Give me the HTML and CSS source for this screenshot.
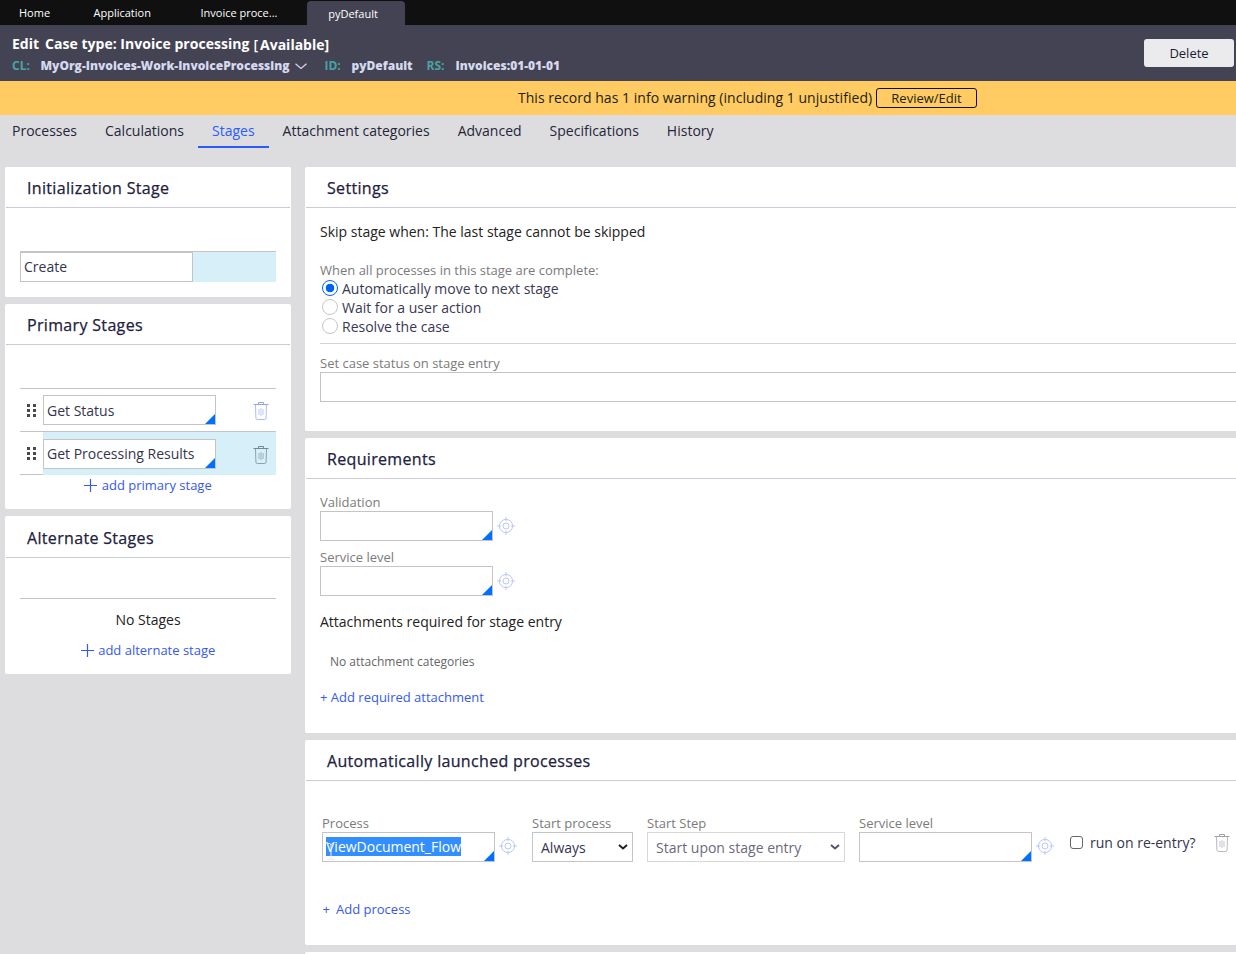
FILE: index.html
```html
<!DOCTYPE html>
<html lang="en">
<head>
<meta charset="utf-8">
<title>pyDefault</title>
<link rel="stylesheet" href="styles.css">
</head>
<body>
<svg class="sprite" aria-hidden="true">
  <symbol id="trash" viewBox="0 0 16 20"><path d="M.5 3.500h15M5.500 3V1.500h5V3" fill="none" stroke="currentColor"/><path d="M2.500 4l.4 13q.1 1.500 1.500 1.500h7.200q1.400 0 1.500-1.500l.4-13" fill="none" stroke="currentColor" opacity=".75"/><path d="M6 8v6M8 7v8M10 8v6" stroke="currentColor" opacity=".6"/></symbol>
  <symbol id="target" viewBox="0 0 18 18"><g fill="none" stroke="currentColor"><circle cx="9" cy="9" r="6.600"/><circle cx="9" cy="9" r="3"/><path d="M9 0v4M9 14v4M0 9h4M14 9h4"/></g></symbol>
  <symbol id="plus" viewBox="0 0 13 13"><path d="M6.500 0v13M0 6.500h13" stroke="currentColor" stroke-width="1.200"/></symbol>
  <symbol id="chev" viewBox="0 0 10 6"><path d="M1 1l4 3.500L9 1" fill="none" stroke="currentColor" stroke-width="2"/></symbol>
</svg>

<nav class="topbar">
  <span class="top-tab home">Home</span>
  <span class="top-tab app">Application</span>
  <span class="top-tab invoice">Invoice proce...</span>
  <span class="top-tab current">pyDefault</span>
</nav>

<header class="header">
  <div class="record">
    <div class="title"><span class="edit">Edit</span><span class="name">Case type: Invoice processing</span><span class="avail">[<b>Available]</b></span></div>
    <div class="meta">
      <span class="key">CL:</span><span class="val cl">MyOrg-Invoices-Work-InvoiceProcessing</span>
      <svg class="caret" viewBox="0 0 12 7"><path d="M.5.8L6 5.500 11.500.8" fill="none" stroke="currentColor" stroke-width="1.200"/></svg>
      <span class="key id">ID:</span><span class="val idv">pyDefault</span>
      <span class="key rs">RS:</span><span class="val rsv">Invoices:01-01-01</span>
    </div>
  </div>
  <button class="delete">Delete</button>
</header>

<div class="warning"><span class="warn-text">This record has 1 info warning (including 1 unjustified)</span><button class="review">Review/Edit</button></div>

<nav class="tabs">
  <a class="tab">Processes</a><a class="tab">Calculations</a><a class="tab active">Stages</a><a class="tab">Attachment categories</a><a class="tab">Advanced</a><a class="tab">Specifications</a><a class="tab">History</a>
</nav>

<main class="main">
  <aside class="col left">
    <section class="card init">
      <h2>Initialization Stage</h2>
      <div class="init-row"><div class="field">Create</div></div>
    </section>
    <section class="card primary">
      <h2>Primary Stages</h2>
      <div class="stage-list">
        <div class="stage"><span class="grip"><i></i><i></i><i></i><i></i><i></i><i></i></span><div class="stage-body"><div class="field combo">Get Status</div><svg class="trash"><use href="#trash"/></svg></div></div>
        <div class="stage selected"><span class="grip"><i></i><i></i><i></i><i></i><i></i><i></i></span><div class="stage-body"><div class="field combo">Get Processing Results</div><svg class="trash"><use href="#trash"/></svg></div></div>
      </div>
      <a class="link add"><svg class="plus"><use href="#plus"/></svg><span class="add-p">add primary stage</span></a>
    </section>
    <section class="card alternate">
      <h2>Alternate Stages</h2>
      <div class="empty">No Stages</div>
      <a class="link add"><svg class="plus"><use href="#plus"/></svg><span class="add-a">add alternate stage</span></a>
    </section>
  </aside>

  <div class="col right">
    <section class="card settings">
      <h2>Settings</h2>
      <div class="body">
        <p class="text skip">Skip stage when: The last stage cannot be skipped</p>
        <div class="label when">When all processes in this stage are complete:</div>
        <div class="radio on"><i></i><span class="r1">Automatically move to next stage</span></div>
        <div class="radio"><i></i><span class="r2">Wait for a user action</span></div>
        <div class="radio"><i></i><span class="r3">Resolve the case</span></div>
        <div class="rule"></div>
        <div class="label status">Set case status on stage entry</div>
        <div class="field wide"></div>
      </div>
    </section>
    <section class="card requirements">
      <h2>Requirements</h2>
      <div class="body">
        <div class="label">Validation</div>
        <div class="line"><div class="field combo"></div><svg class="target"><use href="#target"/></svg></div>
        <div class="label second">Service level</div>
        <div class="line"><div class="field combo"></div><svg class="target"><use href="#target"/></svg></div>
        <p class="text attach">Attachments required for stage entry</p>
        <p class="none">No attachment categories</p>
        <a class="link add-att">+ Add required attachment</a>
      </div>
    </section>
    <section class="card processes">
      <h2>Automatically launched processes</h2>
      <div class="process-row">
        <div class="cell c-process"><div class="label">Process</div><div class="line"><div class="field combo"><span class="picked">ViewDocument_Flow</span><svg class="ibeam" viewBox="0 0 8 17"><path d="M1 .5h2l1 1 1-1h2M4 1v15M.5 16.500h2.500l1-1 1 1h2.500" fill="none" stroke="currentColor"/></svg></div><svg class="target"><use href="#target"/></svg></div></div>
        <div class="cell c-start"><div class="label">Start process</div><div class="field select"><span class="always">Always</span><svg class="chev"><use href="#chev"/></svg></div></div>
        <div class="cell c-step"><div class="label">Start Step</div><div class="field select dim"><span class="upon">Start upon stage entry</span><svg class="chev"><use href="#chev"/></svg></div></div>
        <div class="cell c-level"><div class="label">Service level</div><div class="line"><div class="field combo"></div><svg class="target"><use href="#target"/></svg></div></div>
        <div class="reentry"><i></i><span>run on re-entry?</span></div>
        <svg class="trash"><use href="#trash"/></svg>
      </div>
      <a class="link add-proc"><span>+</span><span>Add process</span></a>
    </section>
    <section class="card next"></section>
  </div>
</main>
</body>
</html>
```
FILE: styles.css
```css
* { box-sizing: border-box; }
html, body { height: 100%; }
body {
  margin: 0; overflow: hidden; background: #dddde0; color: #222;
  font-family: "Open Sans", "Liberation Sans", sans-serif; font-size: 14px; line-height: 20px;
  white-space: nowrap;
}
h2, p { margin: 0; font-weight: 400; }
button { font-family: inherit; padding: 0; white-space: nowrap; }
.sprite { display: none; }
svg { display: block; flex: none; }

.topbar { height: 25px; background: #101010; color: #fff; display: flex; font-size: 11px; line-height: 26px; }
.top-tab { flex: none; }
.home { margin-left: 19px; width: 74.500px; }
.app { width: 107px; }
.invoice { width: 106.500px; }
.current { width: 98px; margin-top: 1px; height: 24px; background: #444354; border-radius: 4px 4px 0 0; text-align: center; padding-right: 6px; }

.header { height: 56px; background: #444354; display: flex; justify-content: space-between; padding: 9px 2px 0 12px; }
.title { color: #fff; font-weight: 700; font-size: 14px; display: flex; }
.edit { width: 33px; }
.name { letter-spacing: .03px; }
.avail { margin-left: 4px; font-weight: 600; padding-top: 1px; }
.avail b { margin-left: 2px; font-weight: 700; }
.meta { display: flex; align-items: center; font-size: 12px; font-weight: 700; height: 22px; color: #d5d9ee; }
.key { color: #4aa3a3; width: 28.500px; }
.val { font-weight: 800; }
.cl { width: 250px; }
.caret { width: 12px; height: 7px; margin-left: 4px; }
.key.id { margin-left: 18px; width: 27px; }
.idv { width: 62px; }
.key.rs { margin-left: 13px; width: 29px; }
.delete { width: 90px; height: 28px; margin-top: 5px; border: 0; border-radius: 3px; background: #ebebed; color: #1b1b35; font-size: 13px; }

.warning { height: 34px; background: #ffcb62; display: flex; align-items: center; padding-left: 518px; color: #221e10; }
.warn-text { width: 358px; letter-spacing: .035px; }
.review { width: 101px; height: 20px; border: 1px solid #111; border-radius: 3px; background: transparent; font-size: 13px; line-height: 16px; padding-bottom: 1px; color: #221e10; }

.tabs { display: flex; height: 52px; padding-left: 12px; gap: 28px; color: #25253a; }
.tab { height: 33px; line-height: 32px; }
.tab.active { color: #295bff; border-bottom: 2px solid #295bff; margin: 0 -14px; padding: 0 14px; }

.main { display: flex; padding-left: 5px; gap: 14px; }
.col { display: flex; flex-direction: column; gap: 7px; }
.left { width: 286px; flex: none; }
.right { flex: 1; min-width: 0; }
.card { background: #fff; border-radius: 2px; flex: none; }
.right .card { border-radius: 2px 0 0 2px; }
.card h2 { height: 41px; margin: 0 1px; padding: 1px 0 0 21px; border-bottom: 1px solid #cbcbd5; font-size: 16px; line-height: 40px; font-weight: 500; letter-spacing: .33px; -webkit-text-stroke: .25px; color: #21213d; }
.right h2 { margin-right: 0; }

.field { width: 173px; height: 30px; flex: none; border: 1px solid #c4c4c4; background: #fff; color: #34344e; padding-left: 3px; line-height: 29px; position: relative; }
.combo::after { content: ""; position: absolute; right: 0; bottom: 0; border-left: 10px solid transparent; border-bottom: 10px solid #0070ff; }

.init { height: 130px; }
.init-row { margin: 43px 15px 0; border-top: 1px solid #c4c4c4; height: 31px; background: #d7eff9; }
.init .field, .selected .field, .select { line-height: 27px; }
.primary { height: 205px; }
.stage-list { margin: 43px 15px 0; border-top: 1px solid #c4c4c4; }
.stage { height: 43px; border-bottom: 1px solid #c4c4c4; display: flex; }
.grip { width: 9px; height: 13px; margin: 15px 7px 0 7px; display: grid; grid-template-columns: 3px 3px; gap: 2px 3px; grid-auto-rows: 3px; }
.grip i { background: #4a4a4a; }
.stage-body { flex: 1; height: 43px; display: flex; padding-top: 6px; }
.stage .trash { margin: 6px 0 0 37px; color: #8ea5fa; }
.selected .stage-body { background: #d7eff9; padding-top: 7px; }
.selected .trash { color: #728893; }
.trash { width: 16px; height: 20px; }
.link { color: #3659ef; font-size: 13px; }
.add { display: flex; justify-content: center; align-items: center; }
.plus { width: 13px; height: 13px; margin-right: 4.500px; }
.alternate { height: 158px; }
.alternate h2 { height: 42px; padding-top: 2px; }
.empty { margin: 40px 15px 0; border-top: 1px solid #c4c4c4; height: 42px; line-height: 42px; text-align: center; }

.body { padding-left: 15px; }
.label { color: #7b7b7b; font-size: 13px; line-height: 18px; height: 18px; }
.settings { height: 264px; }
.skip { padding-top: 14px; height: 53px; }
.when { height: 18px; }
.radio { height: 19px; display: flex; align-items: center; gap: 4px; padding-left: 2px; color: #393955; }
.radio i { width: 16px; height: 16px; margin-bottom: 2px; border: 1px solid #c6c6c6; border-radius: 50%; }
.radio.on i { border-color: #0065ee; background: radial-gradient(circle, #0065ee 4px, transparent 4.600px); }
.rule { height: 1px; margin-top: 7px; background: #d2d2d2; }
.status { margin-top: 10px; }
.wide { width: 100%; border-right: 0; }

.requirements { height: 295px; }
.requirements .body { padding-top: 14px; }
.line { display: flex; align-items: center; }
.second { margin-top: 7px; }
.target { width: 18px; height: 18px; margin-left: 4px; color: #bac7fa; }
.attach { margin-top: 16px; }
.none { margin: 20px 0 0 10px; font-size: 12px; color: #666; }
.add-att { display: block; margin-top: 15px; }

.processes { height: 205px; }
.process-row { display: flex; padding: 33px 0 0 17px; }
.process-row .target { margin-bottom: 2px; }
.cell { flex: none; }
.c-process { width: 210px; }
.c-start { width: 115px; }
.c-step { width: 212px; }
.c-level { width: 211px; }
.select { display: flex; justify-content: space-between; align-items: center; padding: 0 4px 0 8px; }
.c-start .field { width: 101px; }
.c-step .field { width: 198px; }
.chev { width: 10px; height: 6px; color: #1e1e2c; }
.dim { border-color: #d8d8d8; color: #6a6a7b; }
.dim .chev { color: #555468; }
.picked { display: inline-block; background: #338fff; color: #fff; height: 19px; line-height: 20px; vertical-align: top; margin-top: 4px; }
.ibeam { position: absolute; left: 4px; top: 10px; width: 8px; height: 17px; color: #e1e8ed; }
.reentry { display: flex; align-items: center; height: 20px; margin-top: 19px; gap: 7px; width: 144px; color: #34344e; }
.reentry i { width: 13px; height: 13px; margin-bottom: 2px; border: 1px solid #666; border-radius: 3px; flex: none; }
.process-row .trash { margin-top: 19px; color: #a0a0ac; }
.add-proc { display: flex; gap: 6px; padding: 37px 0 0 17.600px; }
.next { height: 40px; }
```
